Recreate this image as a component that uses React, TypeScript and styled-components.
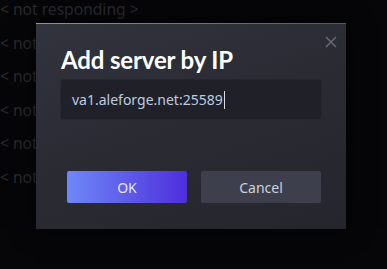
import styled, { createGlobalStyle } from 'styled-components';

const GlobalStyle = createGlobalStyle`
  html, body {
    margin: 0;
    padding: 0;
    background: #060609;
    overflow: hidden;
  }
  body {
    font-family: 'Noto Sans', 'Open Sans', Arial, sans-serif;
  }
`;

const Page = styled.main`
  position: relative;
  width: 387px;
  height: 269px;
  overflow: hidden;
  background: #060609;
`;

const ServerList = styled.ul`
  list-style: none;
  margin: -7px 0 0;
  padding: 0;
`;

const ServerRow = styled.li`
  height: 33.6px;
  line-height: 33.6px;
  font-size: 15.6px;
  color: #2a2a2e;
  white-space: nowrap;
`;

const Dialog = styled.section`
  position: absolute;
  left: 36px;
  top: 23px;
  width: 310px;
  height: 206px;
  box-sizing: border-box;
  padding: 19px 24px 26px;
  display: flex;
  flex-direction: column;
  background: linear-gradient(160deg, #32343d 0%, #2a2b33 45%, #24252d 100%);
  border-top: 1px solid transparent;
  border-image: linear-gradient(90deg, #6c93f1, #5a3be0) 1;
  border-width: 1px 0 0 0;
  box-shadow: 0 0 24px rgba(0, 0, 0, 0.6);
`;

const CloseButton = styled.button`
  position: absolute;
  top: 12px;
  right: 9px;
  width: 12px;
  height: 12px;
  padding: 0;
  border: none;
  background: none;
  cursor: pointer;
  svg {
    display: block;
  }
`;

const Title = styled.h2`
  margin: 0 0 0 1px;
  font-family: Lato, 'Noto Sans', sans-serif;
  font-size: 24px;
  line-height: 34px;
  font-weight: 700;
  letter-spacing: -0.15px;
  color: #ffffff;
`;

const Field = styled.div`
  margin-top: 2px;
  height: 41px;
  box-sizing: border-box;
  padding: 0 11px;
  display: flex;
  align-items: center;
  background: #202128;
  border: 1px solid #26272e;
  border-radius: 3px;
  font-size: 14px;
  color: #bccbe0;

  &::after {
    content: '';
    width: 1px;
    height: 18px;
    margin-left: 1px;
    background: #d8dde6;
  }
`;

const Actions = styled.div`
  margin-top: auto;
  display: flex;
  justify-content: flex-end;
  gap: 14px;
  padding-right: 1px;
`;

const Button = styled.button<{ $primary?: boolean }>`
  width: 120px;
  height: 32px;
  border: none;
  border-radius: 2px;
  font-family: inherit;
  font-size: 14px;
  cursor: pointer;
  color: ${(p) => (p.$primary ? '#e8e6f8' : '#c9d2de')};
  background: ${(p) =>
    p.$primary ? 'linear-gradient(90deg, #6e88f7 0%, #4e2edc 100%)' : '#3e3f4c'};
`;

function App() {
  const rows = Array.from({ length: 6 });

  return (
    <Page>
      <GlobalStyle />
      <ServerList>
        {rows.map((_, i) => (
          <ServerRow key={i}>&lt; not responding &gt;</ServerRow>
        ))}
      </ServerList>
      <Dialog>
        <CloseButton aria-label="Close">
          <svg width="12" height="12" viewBox="0 0 12 12">
            <path d="M1 1L11 11M11 1L1 11" stroke="#6a6e79" strokeWidth="1.4" />
          </svg>
        </CloseButton>
        <Title>Add server by IP</Title>
        <Field>va1.aleforge.net:25589</Field>
        <Actions>
          <Button $primary>OK</Button>
          <Button>Cancel</Button>
        </Actions>
      </Dialog>
    </Page>
  );
}

export default App;
